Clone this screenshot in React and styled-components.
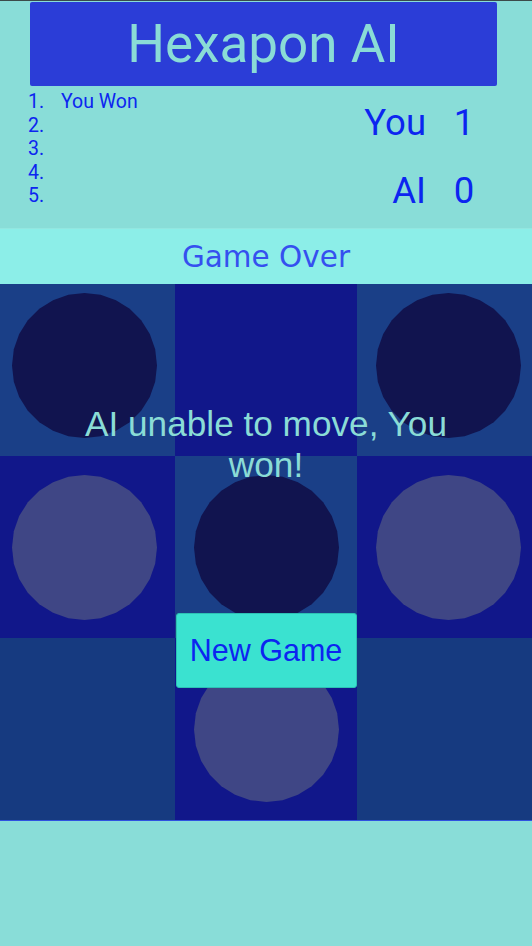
import React from 'react'
import styled, { createGlobalStyle } from 'styled-components'

const teal = '#89ddd8'
const ink = '#0c25f0'

const GlobalStyle = createGlobalStyle`
  html, body {
    margin: 0;
    padding: 0;
    background: ${teal};
  }
  #root {
    min-height: 100vh;
  }
`

const cells = [
  { tone: 'light', piece: 'dark' },
  { tone: 'dark', piece: null },
  { tone: 'light', piece: 'dark' },
  { tone: 'dark', piece: 'light' },
  { tone: 'light', piece: 'dark' },
  { tone: 'dark', piece: 'light' },
  { tone: 'lightLow', piece: null },
  { tone: 'dark', piece: 'light' },
  { tone: 'lightLow', piece: null },
]

const history = ['You Won', '', '', '', '']

const scores = [
  { who: 'You', points: 1 },
  { who: 'AI', points: 0 },
]

const toneColors = {
  light: '#1a3f87',
  lightLow: '#163a80',
  dark: '#11178a',
}

const pieceColors = {
  dark: '#11144f',
  light: '#3f4685',
}

const Page = styled.div`
  display: flex;
  flex-direction: column;
  border-top: 1px solid #3c4a4a;
  background: ${teal};
`

const TitleBar = styled.header`
  margin: 1px 35px 0 30px;
  height: 84px;
  background: #2b3dd7;
  border-radius: 2px;
  display: flex;
  justify-content: center;
  align-items: center;
`

const Title = styled.h1`
  margin: 0;
  font-family: Roboto, 'Noto Sans', sans-serif;
  font-weight: 400;
  font-size: 53px;
  color: #8adcd6;
`

const InfoRow = styled.section`
  height: 142px;
  display: flex;
  justify-content: space-between;
  align-items: flex-start;
  font-family: Roboto, 'Noto Sans', sans-serif;
  color: ${ink};
`

const MoveList = styled.ol`
  margin: 4px 0 0 0;
  padding: 0 0 0 28px;
  list-style: none;
  font-size: 19.5px;
  line-height: 23.5px;
`

const Move = styled.li`
  display: flex;
`

const MoveNumber = styled.span`
  width: 33px;
`

const Scoreboard = styled.div`
  margin: 2px 50px 0 0;
  display: grid;
  grid-template-columns: auto 36px;
  column-gap: 20px;
  grid-auto-rows: 68px;
  align-items: center;
  font-size: 36.5px;
`

const ScoreName = styled.span`
  text-align: right;
`

const ScoreValue = styled.span`
  text-align: center;
`

const StatusBand = styled.div`
  position: relative;
  z-index: 2;
  height: 56px;
  background: #8ceee8;
  border-top: 1px solid #93e6e0;
  box-sizing: border-box;
  display: flex;
  justify-content: center;
  align-items: center;
  font-family: 'DejaVu Sans', Verdana, sans-serif;
  font-size: 29.5px;
  color: #3550ef;
`

const BoardFrame = styled.div`
  position: relative;
  margin-top: -10px;
  width: 532px;
  overflow: hidden;
`

const Board = styled.div`
  margin-left: -7px;
  width: 546px;
  display: grid;
  grid-template-columns: repeat(3, 182px);
  grid-auto-rows: 182px;
  border-bottom: 1px solid #2f52e0;
`

const Cell = styled.div`
  background: ${(p) => toneColors[p.$tone]};
  display: flex;
  justify-content: center;
  align-items: center;
`

const Overlay = styled.div`
  position: absolute;
  inset: 0;
  display: flex;
  flex-direction: column;
  align-items: center;
`

const Message = styled.p`
  margin: 129px 0 0 0;
  width: 420px;
  text-align: center;
  font-family: 'Liberation Sans', Arial, sans-serif;
  font-size: 35.2px;
  line-height: 41px;
  color: #8adcd6;
`

const NewGameButton = styled.button`
  margin-top: 128px;
  width: 181px;
  height: 75px;
  background: #3ae2d0;
  border: 1px solid #2cc2b4;
  border-radius: 3px;
  font-family: 'Liberation Sans', Arial, sans-serif;
  font-size: 30.5px;
  color: ${ink};
  cursor: pointer;
`

const facetPoints = (() => {
  const n = 28
  const pts = []
  for (let i = 0; i < n; i++) {
    const a = (i / n) * Math.PI * 2
    pts.push(`${(72.5 + 72.5 * Math.cos(a)).toFixed(2)},${(72.5 + 72.5 * Math.sin(a)).toFixed(2)}`)
  }
  return pts.join(' ')
})()

const Piece = ({ color }) => (
  <svg width="145" height="145" viewBox="0 0 145 145">
    <polygon points={facetPoints} fill={pieceColors[color]} />
  </svg>
)

export default function App() {
  return (
    <Page>
      <GlobalStyle />
      <TitleBar>
        <Title>Hexapon AI</Title>
      </TitleBar>
      <InfoRow>
        <MoveList>
          {history.map((move, i) => (
            <Move key={i}>
              <MoveNumber>{i + 1}.</MoveNumber>
              <span>{move}</span>
            </Move>
          ))}
        </MoveList>
        <Scoreboard>
          {scores.map(({ who, points }) => (
            <React.Fragment key={who}>
              <ScoreName>{who}</ScoreName>
              <ScoreValue>{points}</ScoreValue>
            </React.Fragment>
          ))}
        </Scoreboard>
      </InfoRow>
      <StatusBand>Game Over</StatusBand>
      <BoardFrame>
        <Board>
          {cells.map((c, i) => (
            <Cell key={i} $tone={c.tone}>
              {c.piece && <Piece color={c.piece} />}
            </Cell>
          ))}
        </Board>
        <Overlay>
          <Message>AI unable to move, You won!</Message>
          <NewGameButton>New Game</NewGameButton>
        </Overlay>
      </BoardFrame>
    </Page>
  )
}
